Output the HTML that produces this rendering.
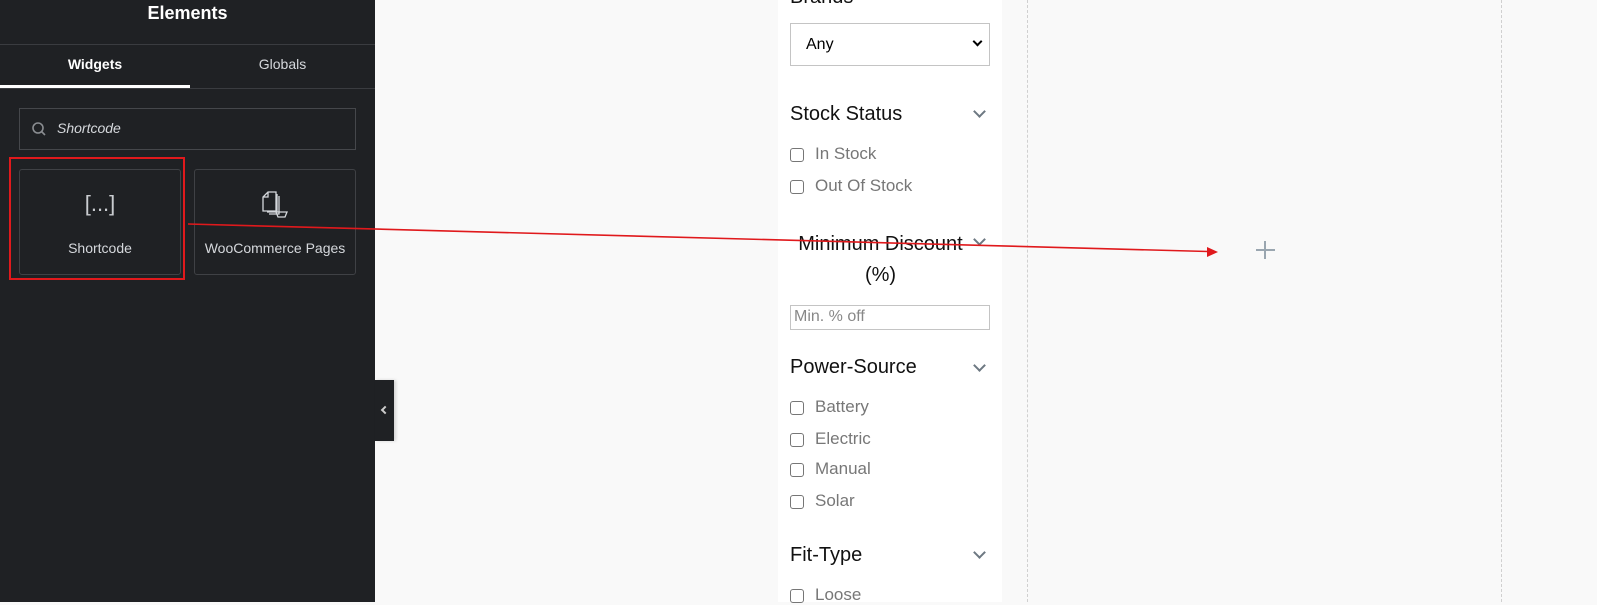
<!DOCTYPE html>
<html><head><meta charset="utf-8"><style>
*{margin:0;padding:0;box-sizing:border-box}
body{width:1597px;height:602px;overflow:hidden;background:#f9f9f9;font-family:"Liberation Sans",sans-serif;position:relative}
.sb{position:absolute;left:0;top:0;width:375px;height:602px;background:#1f2124;color:#fff}
.abs{position:absolute}
.title{left:0;width:375px;top:3px;text-align:center;font-weight:bold;font-size:18px}
.line{left:0;width:375px;height:1px;background:#3a3c40}
.tab{top:56px;font-size:14px;font-weight:bold;text-align:center}
.card{border:1px solid #3f4145;border-radius:3px;width:162px;height:106px;top:169px;color:#d5d8dc;font-size:14px;text-align:center}
.panel{left:778px;top:0;width:224px;height:602px;background:#fff}
.h{left:790px;font-size:20px;color:#111}
.chev{left:975px;width:9px;height:9px;border-right:2px solid #6d7882;border-bottom:2px solid #6d7882;transform:rotate(45deg)}
.cb{left:790px;width:14px;height:14px;border:1.5px solid #767676;border-radius:3px}
.opt{left:815px;font-size:17px;color:#777}
.dash{top:0;height:602px;border-left:1px dashed #d0d0d0}
</style></head><body>
<div class="dash abs" style="left:1027px"></div>
<div class="dash abs" style="left:1501px"></div>
<div class="sb">
<div class="abs title">Elements</div>
<div class="abs line" style="top:44px"></div>
<div class="abs line" style="top:88px"></div>
<div class="abs tab" style="left:0;width:190px">Widgets</div>
<div class="abs tab" style="left:190px;width:185px;color:#d5d8dc;font-weight:normal">Globals</div>
<div class="abs" style="left:0;top:85px;width:190px;height:3px;background:#fff"></div>
<div class="abs" style="left:19px;top:108px;width:337px;height:42px;border:1px solid #45474b"></div>
<svg class="abs" style="left:31px;top:121px" width="16" height="16" viewBox="0 0 16 16"><circle cx="7" cy="7" r="5" fill="none" stroke="#8a8d91" stroke-width="1.6"/><line x1="10.5" y1="10.5" x2="14" y2="14" stroke="#8a8d91" stroke-width="1.6"/></svg>
<div class="abs" style="left:57px;top:120px;font-size:14px;font-style:italic;color:#d5d8dc">Shortcode</div>
<div class="abs" style="left:9px;top:157px;width:176px;height:123px;border:2px solid #e0191c"></div>
<div class="abs card" style="left:19px"><div style="margin-top:21px;font-size:22px;color:#c9ccd0">[...]</div><div style="margin-top:23px">Shortcode</div></div>
<div class="abs card" style="left:194px"><svg style="margin-top:19px" width="30" height="30" viewBox="0 0 30 30" fill="none" stroke="#d5d8dc" stroke-width="1.3"><path d="M8 3h8v19H3V8z M8 3v5H3"/><path d="M17 5v18H7 M19 7v18H9"/><path d="M16 23h11l-2 5h-7z"/></svg><div style="margin-top:18px;font-size:14px">WooCommerce Pages</div></div>
</div>
<div class="abs" style="left:375px;top:380px;width:19px;height:61px;background:#1f2124;box-shadow:2px 0 3px rgba(0,0,0,.15)"></div>
<div class="abs" style="left:382px;top:407px;width:6px;height:6px;border-left:2px solid #ccc;border-bottom:2px solid #ccc;transform:rotate(45deg)"></div>
<div class="abs panel"></div>
<div class="abs h" style="top:-14px">Brands</div>
<div class="abs" style="left:790px;top:23px;width:200px;height:43px;border:1px solid #c4c4c4;background:#fff;font-size:16px;padding:12px 15px;color:#000">Any</div>
<div class="abs" style="left:974px;top:38px;width:7px;height:7px;border-right:2px solid #000;border-bottom:2px solid #000;transform:rotate(45deg)"></div>
<div class="abs h" style="top:103px">Stock Status</div><div class="abs chev" style="top:107px"></div>
<div class="abs cb" style="top:148px"></div><div class="abs opt" style="top:144px">In Stock</div>
<div class="abs cb" style="top:180px"></div><div class="abs opt" style="top:176px">Out Of Stock</div>
<div class="abs h" style="top:229px;left:778px;width:205px;text-align:center;line-height:31px">Minimum Discount<br>(%)</div><div class="abs chev" style="top:235px"></div>
<div class="abs" style="left:790px;top:305px;width:200px;height:25px;border:1px solid #c4c4c4;font-size:16px;color:#888;padding:2px 3px">Min. % off</div>
<div class="abs h" style="top:356px">Power-Source</div><div class="abs chev" style="top:361px"></div>
<div class="abs cb" style="top:401px"></div><div class="abs opt" style="top:397px">Battery</div>
<div class="abs cb" style="top:433px"></div><div class="abs opt" style="top:429px">Electric</div>
<div class="abs cb" style="top:463px"></div><div class="abs opt" style="top:459px">Manual</div>
<div class="abs cb" style="top:495px"></div><div class="abs opt" style="top:491px">Solar</div>
<div class="abs h" style="top:544px">Fit-Type</div><div class="abs chev" style="top:548px"></div>
<div class="abs cb" style="top:589px"></div><div class="abs opt" style="top:585px">Loose</div>
<div class="abs" style="left:1256px;top:249px;width:19px;height:2px;background:#9aa6b0"></div>
<div class="abs" style="left:1264px;top:241px;width:2px;height:18px;background:#9aa6b0"></div>
<svg class="abs" style="left:0;top:0" width="1597" height="602"><line x1="188" y1="224" x2="1208" y2="251.5" stroke="#e0191c" stroke-width="1.6"/><polygon points="1218,252 1207,247 1207,257" fill="#e0191c"/></svg>
</body></html>
